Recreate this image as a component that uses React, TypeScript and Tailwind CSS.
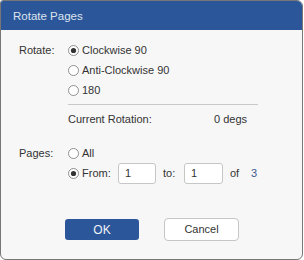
import React from "react";

function Radio({ checked }: { checked?: boolean }) {
  return (
    <svg width="11" height="11" viewBox="0 0 11 11" className="shrink-0">
      <circle cx="5.5" cy="5.5" r="5" fill="#ffffff" stroke="#8f8f8f" strokeWidth="1" />
      {checked && <circle cx="5.5" cy="5.5" r="2.6" fill="#333333" />}
    </svg>
  );
}

function RadioRow({ label, checked, className = "" }: { label: string; checked?: boolean; className?: string }) {
  return (
    <div className={"flex items-center h-[20px] " + className}>
      <Radio checked={checked} />
      <span className="ml-[3px]">{label}</span>
    </div>
  );
}

export default function App() {
  return (
    <div
      className="w-[304px] h-[260px] bg-white text-[11px] text-[#333333]"
      style={{ fontFamily: '"Liberation Sans", Arial, sans-serif' }}
    >
      <div className="w-[303px] h-[260px] flex flex-col border border-[#777777] rounded-tl-[3px] rounded-tr-[6px] rounded-b-[6px] overflow-hidden bg-[#f7f7f7]">
        <div className="h-[29px] shrink-0 bg-[#2b579a] flex items-center pl-[12px] pt-[3px] text-[#dde3ee] text-[11.5px]">
          Rotate Pages
        </div>
        <div className="flex flex-col pl-[18px] pt-[10px]">
          <div className="flex">
            <div className="w-[49px] h-[20px] flex items-center">Rotate:</div>
            <div className="flex flex-col">
              <RadioRow label="Clockwise 90" checked />
              <RadioRow label="Anti-Clockwise 90" />
              <RadioRow label="180" />
              <div className="mt-[4px] w-[190px] h-px bg-[#c9c9c9]" />
              <div className="mt-[4px] h-[20px] flex items-center">
                <span className="w-[146px]">Current Rotation:</span>
                <span>0 degs</span>
              </div>
            </div>
          </div>
          <div className="flex mt-[14px]">
            <div className="w-[49px] h-[20px] flex items-center">Pages:</div>
            <div className="flex flex-col">
              <RadioRow label="All" />
              <div className="flex items-center h-[21px]">
                <Radio checked />
                <span className="ml-[3px] w-[36px]">From:</span>
                <div className="w-[38px] h-[21px] bg-white border border-[#c6c6c6] rounded-[3px] flex items-center pl-[6px]">
                  1
                </div>
                <span className="ml-[7px] w-[21px]">to:</span>
                <div className="w-[39px] h-[21px] bg-white border border-[#c6c6c6] rounded-[3px] flex items-center pl-[6px]">
                  1
                </div>
                <span className="ml-[7px] w-[21px]">of</span>
                <span className="text-[#3d5a92]">3</span>
              </div>
            </div>
          </div>
          <div className="flex items-center mt-[34px] pl-[46px]">
            <div className="w-[74px] h-[21px] bg-[#2b579a] rounded-[3px] flex items-center justify-center text-[#f0f3f8] text-[12px]">
              OK
            </div>
            <div className="ml-[25px] w-[75px] h-[23px] bg-white border border-[#c6c6c6] rounded-[4px] flex items-center justify-center">
              Cancel
            </div>
          </div>
        </div>
      </div>
    </div>
  );
}
